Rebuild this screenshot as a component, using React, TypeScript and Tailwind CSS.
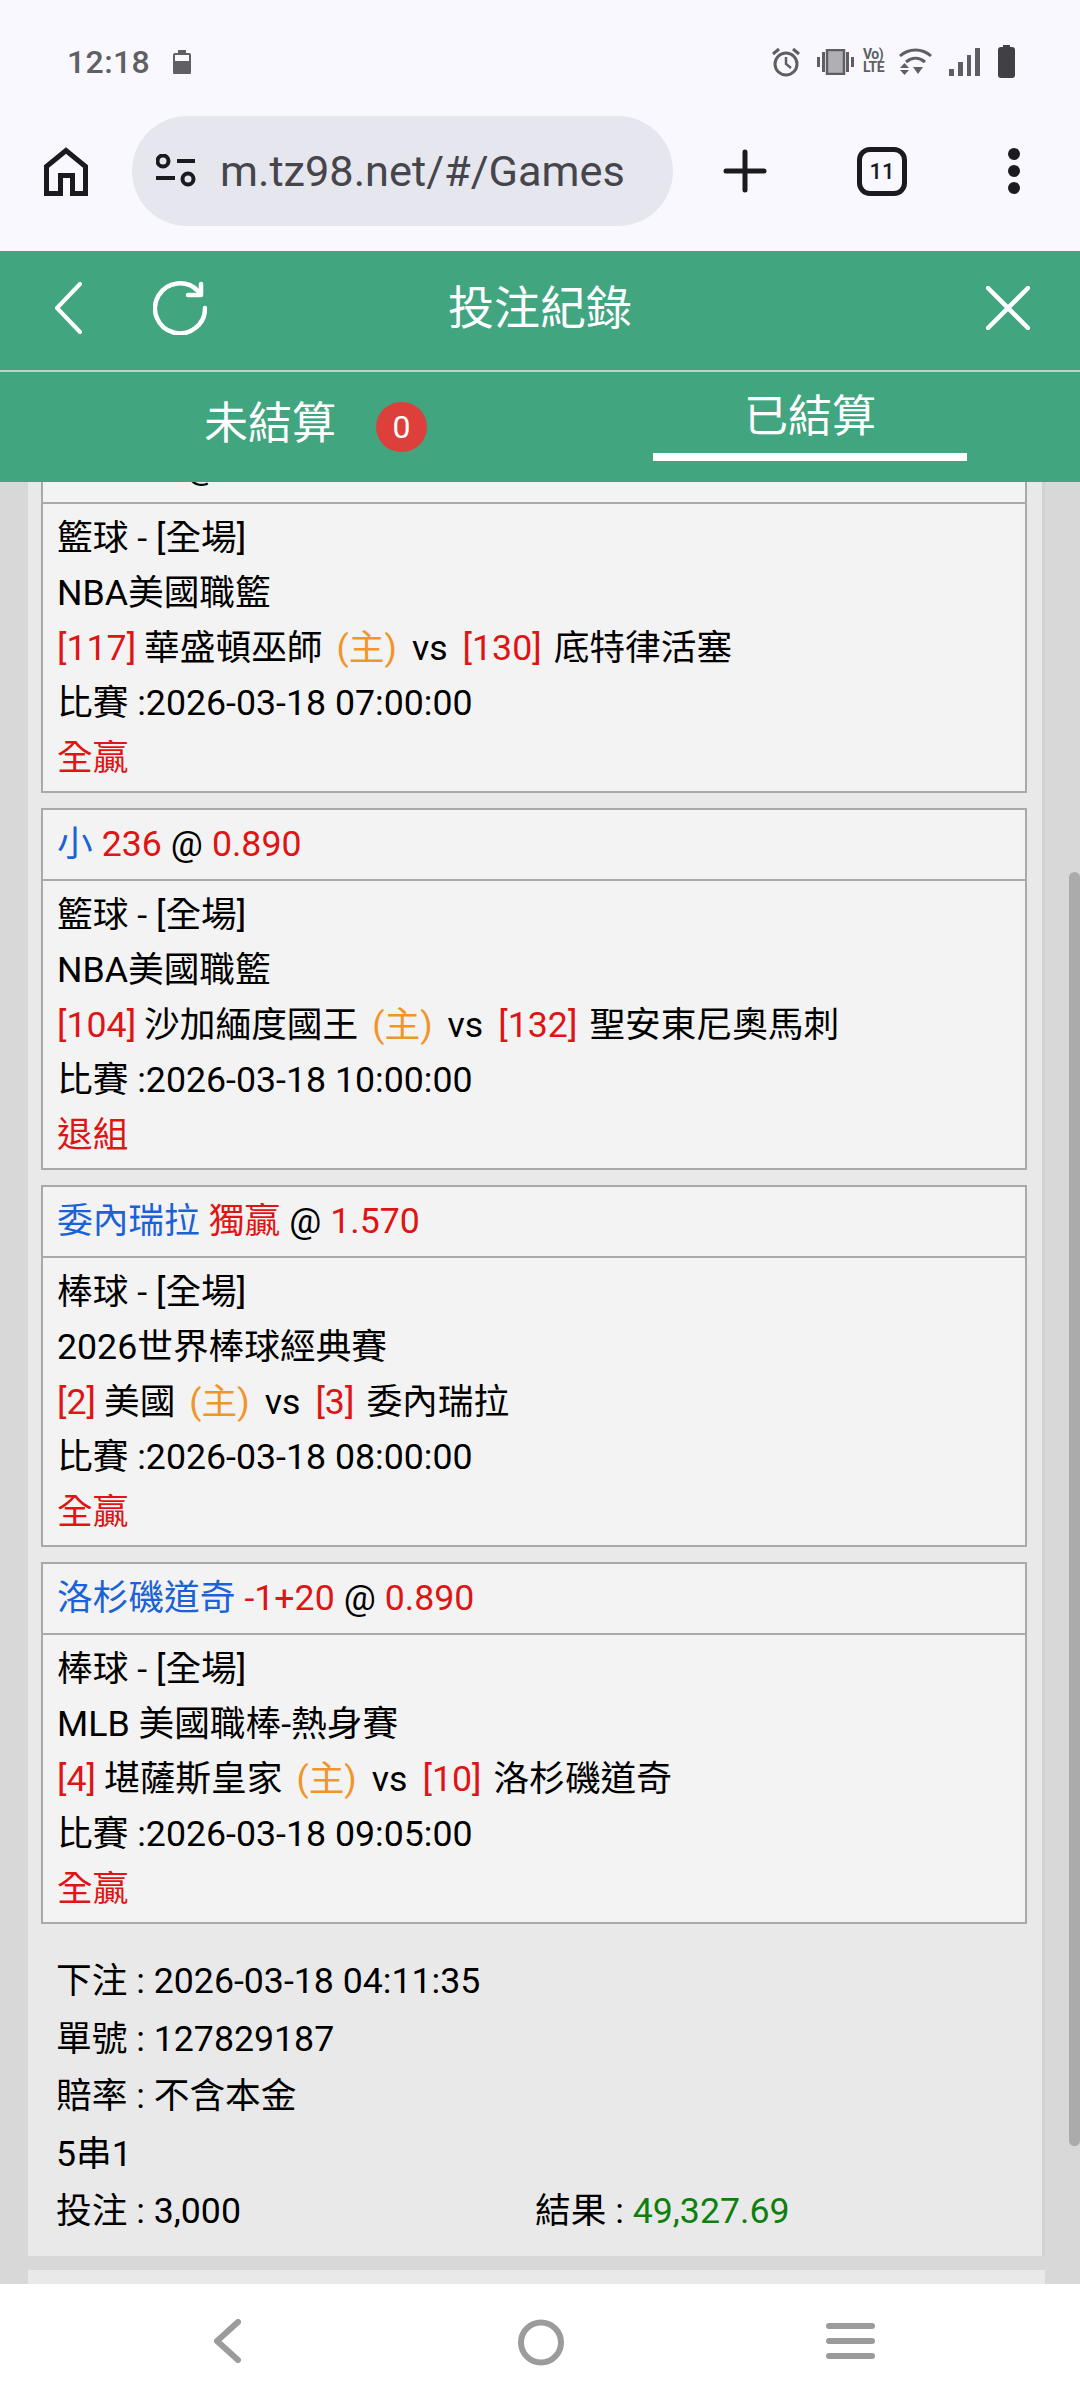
const BETS = [
  {
    pick: [{ text: "@", tone: "black" }],
    pickIndent: "pl-[143px]",
    sport: "籃球 - [全場]",
    league: "NBA美國職籃",
    homeNo: "[117]",
    home: "華盛頓巫師",
    awayNo: "[130]",
    away: "底特律活塞",
    time: "比賽 :2026-03-18 07:00:00",
    result: "全贏",
  },
  {
    pick: [
      { text: "小", tone: "blue" },
      { text: "236", tone: "red" },
      { text: "@", tone: "black" },
      { text: "0.890", tone: "red" },
    ],
    pickIndent: "pl-[14px]",
    sport: "籃球 - [全場]",
    league: "NBA美國職籃",
    homeNo: "[104]",
    home: "沙加緬度國王",
    awayNo: "[132]",
    away: "聖安東尼奧馬刺",
    time: "比賽 :2026-03-18 10:00:00",
    result: "退組",
  },
  {
    pick: [
      { text: "委內瑞拉", tone: "blue" },
      { text: "獨贏", tone: "red" },
      { text: "@", tone: "black" },
      { text: "1.570", tone: "red" },
    ],
    pickIndent: "pl-[14px]",
    sport: "棒球 - [全場]",
    league: "2026世界棒球經典賽",
    homeNo: "[2]",
    home: "美國",
    awayNo: "[3]",
    away: "委內瑞拉",
    time: "比賽 :2026-03-18 08:00:00",
    result: "全贏",
  },
  {
    pick: [
      { text: "洛杉磯道奇", tone: "blue" },
      { text: "-1+20", tone: "red" },
      { text: "@", tone: "black" },
      { text: "0.890", tone: "red" },
    ],
    pickIndent: "pl-[14px]",
    sport: "棒球 - [全場]",
    league: "MLB 美國職棒-熱身賽",
    homeNo: "[4]",
    home: "堪薩斯皇家",
    awayNo: "[10]",
    away: "洛杉磯道奇",
    time: "比賽 :2026-03-18 09:05:00",
    result: "全贏",
  },
];

const TONES: Record<string, string> = {
  blue: "text-[#1a62d6]",
  red: "text-[#df1414]",
  black: "text-black",
};

const StatusIcons = () => (
  <div className="flex items-center text-[#5f5f63]">
    <svg width="28" height="30" viewBox="0 0 28 30" fill="none" stroke="currentColor" strokeWidth="3">
      <circle cx="14" cy="17" r="11" />
      <path d="M14 10v7l5 4" strokeWidth="2.5" />
      <path d="M1 7l6-5M27 7l-6-5" />
    </svg>
    <svg className="ml-[17px]" width="37" height="26" viewBox="0 0 37 26" fill="currentColor">
      <rect x="0" y="8" width="3" height="10" />
      <rect x="5" y="3" width="3" height="20" />
      <rect x="10" y="1" width="17" height="24" fill="#b0b0b4" stroke="currentColor" strokeWidth="2.5" />
      <rect x="29" y="3" width="3" height="20" />
      <rect x="34" y="8" width="3" height="10" />
    </svg>
    <div className="ml-[9px] flex h-[27px] w-[27px] flex-col text-[14px] leading-[13px] font-bold tracking-[-0.5px]">
      <span>Vo)</span>
      <span>LTE</span>
    </div>
    <svg className="ml-[9px]" width="33" height="28" viewBox="0 0 33 28" fill="none" stroke="currentColor" strokeWidth="3">
      <path d="M1 8c9-8 22-8 31 0" />
      <path d="M7 14c6-5 13-5 19 0" />
      <path d="M1 20h9l-4.500-5zM1 22h9l-4.500 5zM14 19h10l-5 7z" fill="currentColor" stroke="none" />
    </svg>
    <svg className="ml-[17px]" width="31" height="28" viewBox="0 0 31 28" fill="currentColor">
      <rect x="0" y="21" width="5" height="7" />
      <rect x="9" y="14" width="5" height="14" />
      <rect x="18" y="7" width="4" height="21" />
      <rect x="26" y="0" width="5" height="28" />
    </svg>
    <svg className="ml-[18px]" width="17" height="33" viewBox="0 0 17 33" fill="#414145">
      <rect x="5" y="0" width="7" height="3" />
      <rect x="0" y="2" width="17" height="31" rx="3" />
    </svg>
  </div>
);

const Toolbar = () => (
  <div className="flex h-[135px] items-start pl-[44px]">
    <div className="flex h-[110px] items-center">
      <svg width="44" height="49" viewBox="0 0 44 49" fill="none" stroke="#1b1b1f" strokeWidth="5">
        <path d="M2.500 46.500V19.500L22 3.500l19.500 16v27H28.500V28.500H16.500v18z" />
      </svg>
      <div className="ml-[44px] flex h-[110px] w-[541px] items-center rounded-full bg-[#e6e6ee] pl-[24px]">
        <svg width="41" height="35" viewBox="0 0 41 35" fill="none" stroke="#1b1b1f" strokeWidth="4">
          <circle cx="7" cy="7" r="5.500" />
          <path d="M21 7h18" />
          <circle cx="32" cy="25" r="5.500" />
          <path d="M0 24h19" />
        </svg>
        <span className="mt-[2px] ml-[23px] text-[43.300px] leading-none text-[#45454b]">m.tz98.net/#/Games</span>
      </div>
      <svg className="ml-[50px]" width="44" height="44" viewBox="0 0 44 44" stroke="#1b1b1f" strokeWidth="5" strokeLinecap="round">
        <path d="M22 3v38M3 22h38" />
      </svg>
      <div className="ml-[90px] flex h-[49px] w-[50px] items-center justify-center rounded-[13px] border-[5px] border-[#1b1b1f] text-[22px] font-medium text-[#1b1b1f]">
        11
      </div>
      <div className="ml-[101px] flex flex-col gap-[5px]">
        <div className="h-[12px] w-[12px] rounded-full bg-[#1b1b1f]" />
        <div className="h-[12px] w-[12px] rounded-full bg-[#1b1b1f]" />
        <div className="h-[12px] w-[12px] rounded-full bg-[#1b1b1f]" />
      </div>
    </div>
  </div>
);

const AppHeader = () => (
  <div className="grid h-[119px] grid-cols-[1fr_auto_1fr] items-center bg-[#41a580] pb-[5px] text-white">
    <div className="flex items-center pl-[54px]">
      <svg width="28" height="52" viewBox="0 0 28 52" fill="none" stroke="white" strokeWidth="4" strokeLinecap="round" strokeLinejoin="round">
        <path d="M26 2L3 26l23 24" />
      </svg>
      <svg className="ml-[71px]" width="54" height="54" viewBox="0 0 54 54" fill="none" stroke="white" strokeWidth="4.500" strokeLinecap="round" strokeLinejoin="round">
        <path d="M45 10A25 25 0 1 0 52 27" />
        <path d="M48 3v11H35" />
      </svg>
    </div>
    <span className="text-[46px] leading-none">投注紀錄</span>
    <div className="flex justify-end pr-[50px]">
      <svg width="44" height="44" viewBox="0 0 44 44" stroke="white" strokeWidth="4.500" strokeLinecap="round">
        <path d="M2 2l40 40M42 2L2 42" />
      </svg>
    </div>
  </div>
);

const Tabs = () => (
  <div className="flex h-[112px] border-t-2 border-[#b9d6ca] bg-[#41a580] text-white">
    <div className="flex w-[653px] items-center pl-[204px]">
      <span className="mb-[6px] text-[44px] leading-none">未結算</span>
      <span className="ml-[40px] flex h-[50px] w-[51px] items-center justify-center rounded-full bg-[#dd3f3a] text-[32px] leading-none">
        0
      </span>
    </div>
    <div className="flex w-[314px] flex-col items-center pt-[20px]">
      <span className="text-[44px] leading-[50px]">已結算</span>
      <div className="mt-[11px] h-[8px] w-full bg-white" />
    </div>
  </div>
);

const BetCard = ({ bet }: { bet: (typeof BETS)[number] }) => (
  <div className="border-2 border-[#a9a9a9] bg-[#f3f3f3] text-[35.700px] leading-[55px] text-black">
    <div className={`flex h-[71px] items-center gap-[9px] border-b-2 border-[#a9a9a9] ${bet.pickIndent}`}>
      {bet.pick.map((part, i) => (
        <span key={i} className={TONES[part.tone]}>
          {part.text}
        </span>
      ))}
    </div>
    <div className="px-[14px] pt-[7px] pb-[5px]">
      <p>{bet.sport}</p>
      <p>{bet.league}</p>
      <p className="flex whitespace-nowrap">
        <span className="text-[#df1414]">{bet.homeNo}</span>
        <span className="ml-[8px]">{bet.home}</span>
        <span className="ml-[14px] text-[#f0952a]">(主)</span>
        <span className="ml-[15px]">vs</span>
        <span className="ml-[15px] text-[#df1414]">{bet.awayNo}</span>
        <span className="ml-[12px]">{bet.away}</span>
      </p>
      <p>{bet.time}</p>
      <p className="text-[#df1414]">{bet.result}</p>
    </div>
  </div>
);

const BottomNav = () => (
  <div className="flex h-[116px] items-start bg-white pt-[35px] pl-[213px]">
    <svg width="28" height="44" viewBox="0 0 28 44" fill="none" stroke="#9b9b9b" strokeWidth="6" strokeLinecap="round" strokeLinejoin="round">
      <path d="M25 3L4 22l21 19" />
    </svg>
    <svg className="ml-[277px]" width="46" height="47" viewBox="0 0 46 47" fill="none" stroke="#9b9b9b" strokeWidth="6">
      <circle cx="23" cy="23.500" r="20" />
    </svg>
    <div className="mt-[4px] ml-[262px] flex w-[49px] flex-col gap-[9px]">
      <div className="h-[6px] rounded-full bg-[#9b9b9b]" />
      <div className="h-[6px] rounded-full bg-[#9b9b9b]" />
      <div className="h-[6px] rounded-full bg-[#9b9b9b]" />
    </div>
  </div>
);

const App = () => {
  return (
    <div className="flex h-[2400px] w-[1080px] flex-col overflow-hidden bg-[#f8f8fe] [font-family:Roboto,'Noto_Sans_CJK_TC',sans-serif]">
      <div className="flex h-[116px] items-start justify-between pt-[45px] pr-[65px] pl-[67px]">
        <div className="flex h-[33px] items-center text-[32px] leading-none font-medium tracking-[0.4px] text-[#606064]">
          12:18
          <svg className="ml-[23px]" width="18" height="24" viewBox="0 0 18 24" fill="#606064">
            <rect x="5" y="0" width="8" height="3" />
            <path d="M2 4h14a1 1 0 0 1 1 1v17a2 2 0 0 1-2 2H3a2 2 0 0 1-2-2V5a1 1 0 0 1 1-1z" fill="none" stroke="#606064" strokeWidth="2" />
            <path d="M1 11h16v11a2 2 0 0 1-2 2H3a2 2 0 0 1-2-2z" />
          </svg>
        </div>
        <StatusIcons />
      </div>
      <Toolbar />
      <AppHeader />
      <Tabs />
      <div className="relative flex-1 overflow-hidden bg-[#d8d8d8]">
        <div className="-mt-[51px] ml-[28px] w-[1017px]">
          <div className="flex flex-col gap-[15px] border-r-[3px] border-[#d1d1d1] bg-[#e9e9e9] pr-[15px] pl-[13px]">
            {BETS.map((bet, i) => (
              <BetCard key={i} bet={bet} />
            ))}
          </div>
          <div className="border-r-[3px] border-[#d1d1d1] bg-[#e9e9e9] px-[28px] pt-[29px] pb-[15px] text-[35.700px] leading-[57.500px] text-black">
            <p>下注 : 2026-03-18 04:11:35</p>
            <p>單號 : 127829187</p>
            <p>賠率 : 不含本金</p>
            <p>5串1</p>
            <div className="flex">
              <p className="w-[479px]">投注 : 3,000</p>
              <p>
                結果 : <span className="text-[#0f7f0f]">49,327.69</span>
              </p>
            </div>
          </div>
          <div className="mt-[14px] h-[60px] bg-[#e9e9e9]" />
        </div>
        <div className="absolute top-[390px] right-0 h-[1274px] w-[11px] rounded-full bg-[#ababab]" />
      </div>
      <BottomNav />
    </div>
  );
};

export default App;
